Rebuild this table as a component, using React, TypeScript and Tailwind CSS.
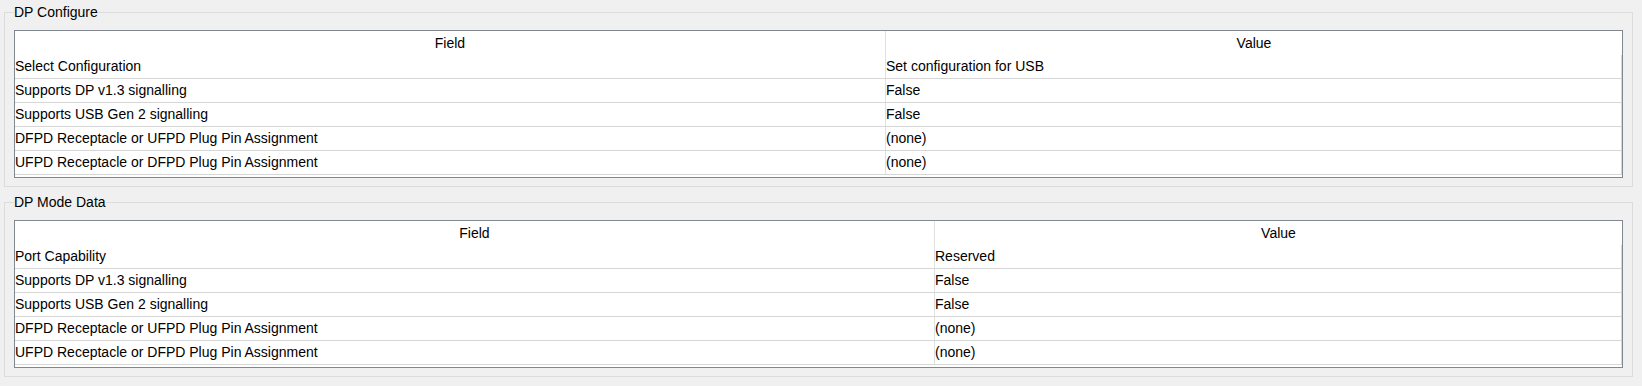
import React from "react";

type Row = [string, string];

const configRows: Row[] = [
  ["Select Configuration", "Set configuration for USB"],
  ["Supports DP v1.3 signalling", "False"],
  ["Supports USB Gen 2 signalling", "False"],
  ["DFPD Receptacle or UFPD Plug Pin Assignment", "(none)"],
  ["UFPD Receptacle or DFPD Plug Pin Assignment", "(none)"],
];

const modeRows: Row[] = [
  ["Port Capability", "Reserved"],
  ["Supports DP v1.3 signalling", "False"],
  ["Supports USB Gen 2 signalling", "False"],
  ["DFPD Receptacle or UFPD Plug Pin Assignment", "(none)"],
  ["UFPD Receptacle or DFPD Plug Pin Assignment", "(none)"],
];

function Table({ rows, cols }: { rows: Row[]; cols: string }) {
  return (
    <div className="border border-[#828790] bg-white pb-[2px]">
      <div className={`grid ${cols} h-6 items-center`}>
        <div className="text-center">Field</div>
        <div className="h-full flex items-center justify-center border-l border-[#e0e0e0]">Value</div>
      </div>
      {rows.map(([f, v], i) => (
        <div
          key={i}
          className={`grid ${cols} h-6 border-b border-r border-[#d6d6d6] items-stretch`}
        >
          <div className="flex items-center whitespace-nowrap">{f}</div>
          <div className="flex items-center whitespace-nowrap border-l border-[#e0e0e0]">{v}</div>
        </div>
      ))}
    </div>
  );
}

function Group({ title, children, className }: { title: string; children: React.ReactNode; className: string }) {
  return (
    <fieldset className={`border border-[#dcdcdc] mx-1 pl-[9px] pr-[9px] pt-[9px] pb-[8px] ${className}`}>
      <legend className="leading-[17px] p-0">{title}</legend>
      {children}
    </fieldset>
  );
}

export default function App() {
  return (
    <div
      className="w-[1642px] h-[386px] bg-[#f0f0f0] pt-1 text-[14px] text-black overflow-hidden"
      style={{ fontFamily: '"Liberation Sans", Arial, sans-serif' }}
    >
      <Group title="DP Configure" className="w-[1629px]">
        <Table rows={configRows} cols="grid-cols-[870px_1fr]" />
      </Group>
      <Group title="DP Mode Data" className="w-[1629px] mt-[7px]">
        <Table rows={modeRows} cols="grid-cols-[919px_1fr]" />
      </Group>
    </div>
  );
}
